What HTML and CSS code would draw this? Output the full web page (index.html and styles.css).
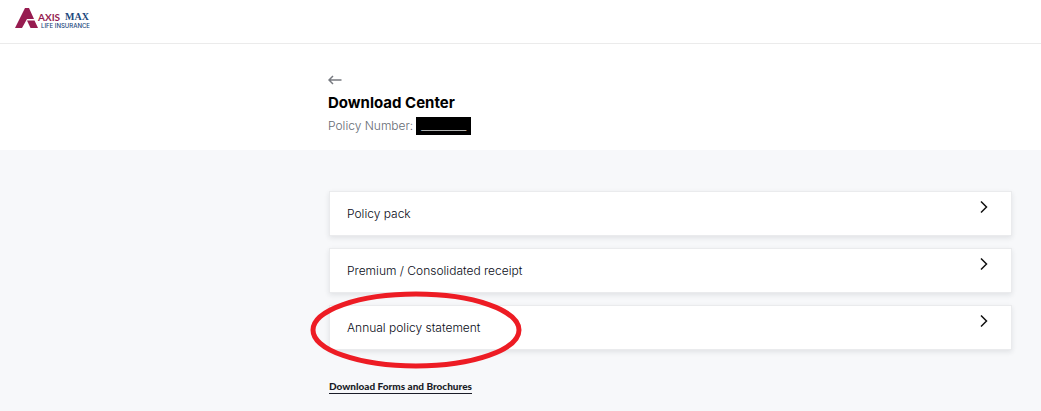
FILE: index.html
```html
<!DOCTYPE html>
<html lang="en">
<head>
<meta charset="utf-8">
<meta name="viewport" content="width=device-width, initial-scale=1">
<title>Download Center</title>
<link rel="stylesheet" href="styles.css">
</head>
<body>
<header class="topbar">
  <a class="brand" href="#">
    <svg class="brand-mark" viewBox="0 0 23 21" aria-hidden="true">
      <path d="M10 0h4l5 11h-7L7 20H0z"/>
      <path d="M12 12.500h7.500L23 20h-7.500z"/>
    </svg>
    <span class="brand-text">
      <span class="brand-name"><span class="brand-axis">AXIS</span><span class="brand-max">MAX</span></span>
      <span class="brand-line">LIFE INSURANCE</span>
    </span>
  </a>
</header>
<section class="intro">
  <button class="back" type="button" aria-label="Back">
    <svg viewBox="0 0 14 10" aria-hidden="true"><path d="M13.500 5H1M5 1L1 5l4 4"/></svg>
  </button>
  <h1 class="title">Download Center</h1>
  <p class="policy">Policy Number: <span class="redacted">_________</span></p>
</section>
<main class="content">
  <nav class="cards">
    <a class="card" href="#"><span>Policy pack</span><svg class="chevron" viewBox="0 0 8 12" aria-hidden="true"><path d="M1 .5L6.500 6 1 11.500"/></svg></a>
    <a class="card" href="#"><span>Premium / Consolidated receipt</span><svg class="chevron" viewBox="0 0 8 12" aria-hidden="true"><path d="M1 .5L6.500 6 1 11.500"/></svg></a>
    <a class="card" href="#"><span>Annual policy statement</span><svg class="chevron" viewBox="0 0 8 12" aria-hidden="true"><path d="M1 .5L6.500 6 1 11.500"/></svg>
      <svg class="marker" viewBox="0 0 212 78" aria-hidden="true"><ellipse cx="106" cy="39" rx="103" ry="36"/></svg></a>
  </nav>
  <a class="forms" href="#">Download Forms and Brochures</a>
</main>
</body>
</html>
```
FILE: styles.css
```css
* { box-sizing: border-box; }
body {
  margin: 0;
  min-height: 100vh;
  display: flex;
  flex-direction: column;
  font-family: Inter, "Open Sans", sans-serif;
  font-size: 12px;
  color: #1b1d28;
  background: #fff;
}
.topbar {
  padding: 8px 15px 14px;
  border-bottom: 1px solid #ebebeb;
}
.brand {
  display: inline-flex;
  vertical-align: top;
  height: 21px;
  text-decoration: none;
}
.brand-mark { width: 23px; height: 21px; fill: #971c50; }
.brand-text { display: flex; flex-direction: column; padding-top: 4px; }
.brand-name { display: flex; gap: 5px; line-height: 10px; }
.brand-axis { color: #971c50; font: 700 10px/10px Lato, sans-serif; }
.brand-max { color: #20477c; font: bold 10px/10px "Liberation Serif", serif; }
.brand-line { padding-left: 3px; color: #20477c; font: 500 6px/8px Inter, sans-serif; white-space: nowrap; }
.intro { padding: 31px 29px 15px 328px; }
.back {
  display: block;
  padding: 0;
  border: 0;
  background: none;
  cursor: pointer;
}
.back svg { display: block; width: 14px; height: 10px; fill: none; stroke: #777a80; stroke-width: 1.500; }
.title { margin: 8px 0 4px; font-size: 15px; line-height: 20px; font-weight: 700; color: #000; }
.policy { display: flex; align-items: center; gap: 3px; margin: 0; line-height: 18px; color: #666b73; font-weight: 300; }
.redacted { height: 18px; padding: 0 5px; background: #000; color: #fff; font: 9px/18px "Liberation Sans", sans-serif; }
.content { flex: 1; padding: 41px 29px 16px 329px; background: #f7f8fa; }
.cards { display: flex; flex-direction: column; gap: 12px; }
.card {
  position: relative;
  display: flex;
  justify-content: space-between;
  align-items: flex-start;
  padding: 9px 23px 8px 17px;
  border: 1px solid #eaebed;
  background: #fff;
  box-shadow: 0 2px 5px rgba(30, 35, 45, 0.1);
  color: #080a16;
  font-weight: 300;
  line-height: 26px;
  text-decoration: none;
}
.chevron { width: 8px; height: 12px; fill: none; stroke: #111; stroke-width: 1.500; }
.marker {
  position: absolute;
  z-index: 1;
  left: -20px;
  top: -15px;
  width: 212px;
  height: 78px;
  fill: none;
  stroke: #ed1c24;
  stroke-width: 5;
  pointer-events: none;
}
.forms {
  display: inline-block;
  margin-top: 30px;
  border-bottom: 1px solid #1b1d28;
  color: inherit;
  font-family: Lato, sans-serif;
  font-size: 10px;
  line-height: 13px;
  font-weight: 900;
  text-decoration: none;
}
```
